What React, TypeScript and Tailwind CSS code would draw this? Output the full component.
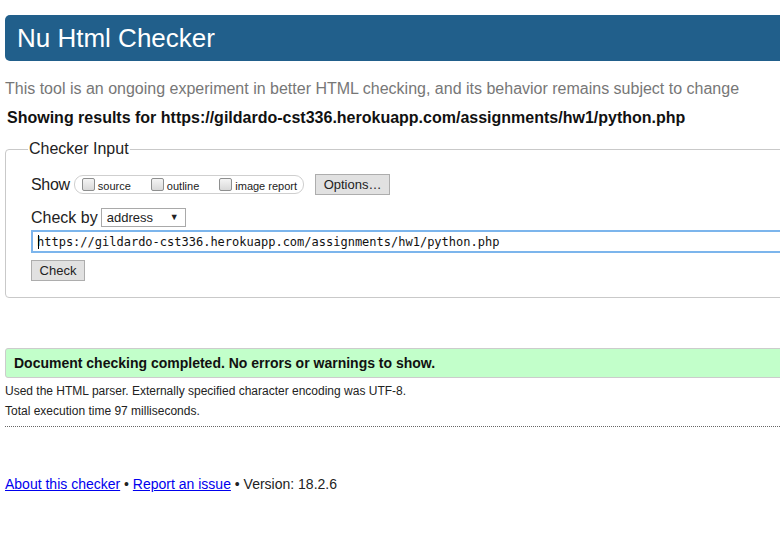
import React from 'react'

const url = 'https://gildardo-cst336.herokuapp.com/assignments/hw1/python.php'

// Windows-ish unchecked checkbox
const Box = () => (
  <span className="inline-block w-[13px] h-[13px] rounded-[2px] border border-[#8e8f8f] bg-gradient-to-b from-[#f4f4f4] to-[#d9d9d9] shrink-0" />
)

const ShowOption = ({ label }: { label: string }) => (
  <label className="flex items-center gap-[3px]">
    <Box />
    <span className="text-[11px] leading-[13px] mt-[3px]">{label}</span>
  </label>
)

const App: React.FC = () => {
  return (
    <div className="w-[780px] h-[559px] overflow-hidden bg-white text-[#222] font-['Liberation_Sans',Arial,sans-serif]">
      <div className="w-[830px] pl-[5px]">
        {/* Title bar */}
        <div className="mt-[15px] h-[46px] rounded-[5px] bg-[#215f8b] flex items-center pl-[12px]">
          <h1 className="text-[26px] leading-none text-white">Nu Html Checker</h1>
        </div>

        <p className="mt-[18px] text-[16px] leading-[20px] text-[#777]">
          This tool is an ongoing experiment in better HTML checking, and its behavior remains subject to change
        </p>
        <p className="mt-[9px] ml-[2px] text-[16px] leading-[20px] font-bold text-[#111]">
          Showing results for {url}
        </p>

        {/* Checker input */}
        <fieldset className="mt-[11px] border border-[#c9c9c9] rounded-[4px] pl-[25px] pb-[15px]">
          <legend className="ml-[-3px] px-[1px] text-[16px] leading-[20px]">Checker Input</legend>

          <div className="mt-[15px] h-[21px] flex items-center">
            <span className="text-[16px] leading-[20px] tracking-[-0.3px]">Show</span>
            <div className="ml-[4px] h-[19px] flex items-center gap-[20px] pl-[7px] pr-[6px] border border-[#cfcfcf] rounded-[9px]">
              <ShowOption label="source" />
              <ShowOption label="outline" />
              <ShowOption label="image report" />
            </div>
            <button className="ml-[11px] h-[21px] w-[75px] border border-[#adadad] bg-[#e1e1e1] text-[13px] leading-none">
              Options…
            </button>
          </div>

          <div className="mt-[13px] h-[19px] flex items-center">
            <span className="text-[16px] leading-[20px]">Check by</span>
            <div className="ml-[3px] h-[19px] w-[85px] border border-[#a9a9a9] bg-white flex items-center justify-between pl-[5px] pr-[6px]">
              <span className="text-[13px] leading-none">address</span>
              <span className="text-[9px] leading-none">▼</span>
            </div>
          </div>

          <div className="mt-[3px] h-[23px] border-2 border-[#7cb5ec] bg-white flex items-center pl-[4px]">
            <span className="relative font-['DejaVu_Sans_Mono',monospace] text-[12px] leading-none text-[#111]">
              <span className="absolute left-[1px] top-[-1px] h-[14px] border-l border-black" />
              {url}
            </span>
          </div>

          <button className="mt-[7px] h-[21px] w-[54px] border border-[#adadad] bg-[#e1e1e1] text-[13px] leading-none">
            Check
          </button>
        </fieldset>

        {/* Result */}
        <div className="mt-[50px] h-[30px] border border-[#cccccc] rounded-[3px] bg-[#c2ffca] flex items-center pl-[8px]">
          <span className="text-[14px] font-bold text-[#111]">
            Document checking completed. No errors or warnings to show.
          </span>
        </div>

        <p className="mt-[3px] text-[12px] leading-[20px] text-[#222]">
          Used the HTML parser. Externally specified character encoding was UTF-8.
        </p>
        <p className="text-[12px] leading-[20px] text-[#222]">Total execution time 97 milliseconds.</p>
        <div className="mt-[5px] border-t border-dotted border-[#666]" />

        <p className="mt-[47px] text-[14px] leading-[20px] text-[#222]">
          <a href="#" className="text-[#0000ee] underline">About this checker</a>
          {' • '}
          <a href="#" className="text-[#0000ee] underline">Report an issue</a>
          {' • Version: 18.2.6'}
        </p>
      </div>
    </div>
  )
}

export default App
